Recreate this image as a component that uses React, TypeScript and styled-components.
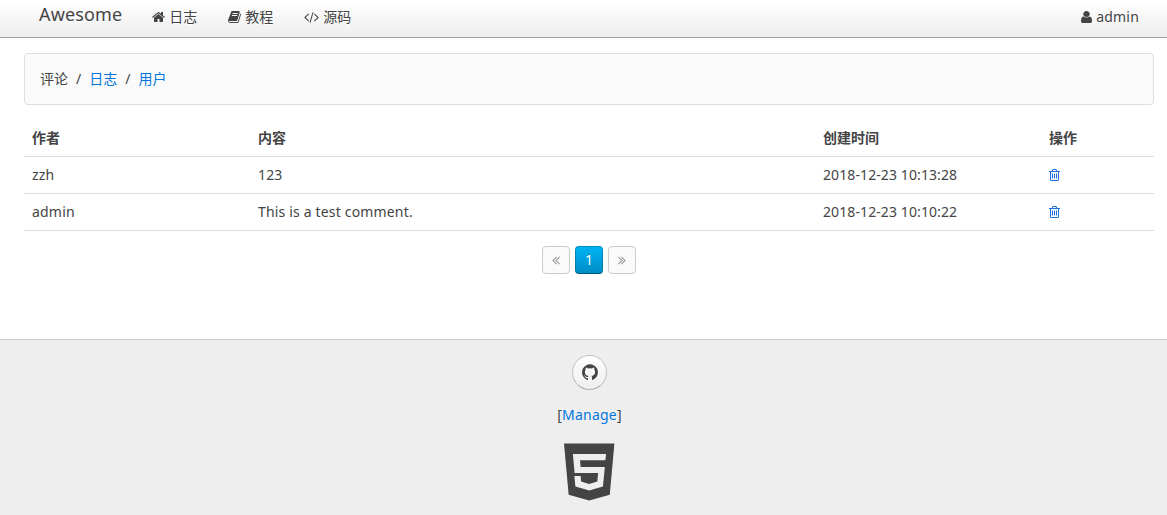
import React from 'react';
import styled, { createGlobalStyle, css } from 'styled-components';

const Global = createGlobalStyle`
  *, *::before, *::after { box-sizing: border-box; }
  html { background: #fff; }
  body {
    margin: 0;
    overflow: hidden;
    font: 14px/20px "Noto Sans", "Noto Sans CJK SC", sans-serif;
    color: #444;
  }
`;

const glyphs = {
  home: {
    box: '64 0 1664 1792',
    width: 13,
    d: 'M1472 992v480q0 26-19 45t-45 19h-384v-384h-256v384h-384q-26 0-45-19t-19-45v-480q0-1 .5-3t.5-3l575-474 575 474q1 2 1 6zm223-69l-62 74q-8 9-21 11h-3q-13 0-21-7l-692-577-692 577q-12 8-24 7-13-2-21-11l-62-74q-8-10-7-23.5t11-21.5l719-599q32-26 76-26t76 26l244 204v-195q0-14 9-23t23-9h192q14 0 23 9t9 23v408l219 182q10 8 11 21.5t-7 23.5z',
  },
  book: {
    box: '64 0 1664 1792',
    width: 13,
    d: 'M1703 478q40 57 18 129l-275 906q-19 64-76.5 107.5t-122.5 43.5h-923q-77 0-148.5-53.5t-99.5-131.5q-24-67-2-127 0-4 3-27t4-37q1-8-3-21.5t-3-19.5q2-11 8-21t16.5-23.5 16.5-23.5q23-38 45-91.5t30-91.5q3-10 .5-30t-.5-28q3-11 17-28t17-23q21-36 42-92t25-90q1-9-2.5-32t.5-28q4-13 22-30.5t22-22.5q19-26 42.5-84.5t27.5-96.5q1-8-3-25.5t-2-26.5q2-8 9-18t18-23 17-21q8-12 16.5-30.5t15-35 16-36 19.5-32 26.5-23.5 36-11.5 47.5 5.5l-1 3q38-9 51-9h761q74 0 114 56t18 130l-274 906q-36 119-71.5 153.5t-128.5 34.5h-869q-27 0-38 15-11 16-1 43 24 70 144 70h923q29 0 56-15.5t35-41.5l300-987q7-22 5-57 38 15 59 43zm-1064 2q-4 13 2 22.5t20 9.5h608q13 0 25.5-9.5t16.5-22.5l21-64q4-13-2-22.5t-20-9.5h-608q-13 0-25.5 9.5t-16.5 22.5zm-83 256q-4 13 2 22.5t20 9.5h608q13 0 25.5-9.5t16.5-22.5l21-64q4-13-2-22.5t-20-9.5h-608q-13 0-25.5 9.5t-16.5 22.5z',
  },
  code: {
    box: '0 0 1920 1792',
    width: 15,
    d: 'M617 1399l-50 50q-10 10-23 10t-23-10l-466-466q-10-10-10-23t10-23l466-466q10-10 23-10t23 10l50 50q10 10 10 23t-10 23l-393 393 393 393q10 10 10 23t-10 23zm591-1067l-373 1291q-4 13-15.5 19.5t-23.5 2.5l-62-17q-13-4-19.5-15.5t-2.5-24.5l373-1291q4-13 15.5-19.5t23.5-2.5l62 17q13 4 19.5 15.5t2.5 24.5zm657 651l-466 466q-10 10-23 10t-23-10l-50-50q-10-10-10-23t10-23l393-393-393-393q-10-10-10-23t10-23l50-50q10-10 23-10t23 10l466 466q10 10 10 23t-10 23z',
  },
  user: {
    box: '256 0 1280 1792',
    width: 11,
    d: 'M1536 1399q0 109-62.5 187t-150.5 78h-854q-88 0-150.5-78t-62.5-187q0-85 8.5-160.5t31.5-152 58.5-131 94-89 134.5-34.5q131 128 313 128t313-128q76 0 134.5 34.5t94 89 58.5 131 31.5 152 8.5 160.5zm-256-887q0 159-112.5 271.5t-271.5 112.5-271.5-112.5-112.5-271.5 112.5-271.5 271.5-112.5 271.5 112.5 112.5 271.5z',
  },
  trash: {
    box: '192 0 1408 1792',
    width: 11,
    d: 'M704 736v576q0 14-9 23t-23 9h-64q-14 0-23-9t-9-23v-576q0-14 9-23t23-9h64q14 0 23 9t9 23zm256 0v576q0 14-9 23t-23 9h-64q-14 0-23-9t-9-23v-576q0-14 9-23t23-9h64q14 0 23 9t9 23zm256 0v576q0 14-9 23t-23 9h-64q-14 0-23-9t-9-23v-576q0-14 9-23t23-9h64q14 0 23 9t9 23zm128 724v-948h-896v948q0 22 7 40.5t14.5 27 10.5 8.5h832q3 0 10.5-8.5t14.5-27 7-40.5zm-672-1076h448l-48-117q-7-9-17-11h-317q-10 2-17 11zm928 32v64q0 14-9 23t-23 9h-96v948q0 83-47 143.5t-113 60.5h-832q-66 0-113-58.5t-47-141.5v-952h-96q-14 0-23-9t-9-23v-64q0-14 9-23t23-9h309l70-167q15-37 54-63t79-26h320q40 0 79 26t54 63l70 167h309q14 0 23 9t9 23z',
  },
  prev: {
    box: '0 0 1024 1792',
    width: 8,
    d: 'M627 1376q0 13-10 23l-50 50q-10 10-23 10t-23-10l-466-466q-10-10-10-23t10-23l466-466q10-10 23-10t23 10l50 50q10 10 10 23t-10 23l-393 393 393 393q10 10 10 23zm384 0q0 13-10 23l-50 50q-10 10-23 10t-23-10l-466-466q-10-10-10-23t10-23l466-466q10-10 23-10t23 10l50 50q10 10 10 23t-10 23l-393 393 393 393q10 10 10 23z',
  },
  next: {
    box: '0 0 1024 1792',
    width: 8,
    d: 'M595 960q0 13-10 23l-466 466q-10 10-23 10t-23-10l-50-50q-10-10-10-23t10-23l393-393-393-393q-10-10-10-23t10-23l50-50q10-10 23-10t23 10l466 466q10 10 10 23zm384 0q0 13-10 23l-466 466q-10 10-23 10t-23-10l-50-50q-10-10-10-23t10-23l393-393-393-393q-10-10-10-23t10-23l50-50q10-10 23-10t23 10l466 466q10 10 10 23z',
  },
  github: {
    box: '128 0 1536 1792',
    width: 12,
    d: 'M896 128q209 0 385.5 103t279.5 279.5 103 385.5q0 251-146.5 451.5t-378.5 277.5q-27 5-40-7t-13-30q0-3 .5-76.5t.5-134.5q0-97-52-142 57-6 102.5-18t94-39 81-66.5 53-105 20.5-150.5q0-119-79-206 37-91-8-204-28-9-81 11t-92 44l-38 24q-93-26-192-26t-192 26q-16-11-42.5-27t-83.5-38.5-85-13.5q-45 113-8 204-79 87-79 206 0 85 20.5 150t52.5 105 80.5 67 94 39 102.5 18q-39 36-49 103-21 10-45 15t-57 5-65.5-21.5-55.5-62.5q-19-32-48.5-52t-49.5-24l-20-3q-21 0-29 4.5t-5 11.5 9 14 13 12l7 5q22 10 43.5 38t31.5 51l10 23q13 38 44 61.5t67 30 69.5 7 55.5-3.5l23-4q0 38 .5 88.5t.5 54.5q0 18-13 30t-40 7q-232-77-378.5-277.5t-146.5-451.5q0-209 103-385.5t279.5-279.5 385.5-103z',
  },
};

const Svg = styled.svg`
  display: inline-block;
  flex: none;
  vertical-align: -2px;
  fill: currentColor;
`;

function Icon({ name, scale = 1 }: { name: keyof typeof glyphs; scale?: number }) {
  const g = glyphs[name];
  return (
    <Svg
      viewBox={g.box}
      width={g.width * scale}
      height={14 * scale}
      preserveAspectRatio="none"
      aria-hidden
    >
      <path d={g.d} />
    </Svg>
  );
}

const Navbar = styled.nav`
  display: flex;
  height: 38px;
  padding: 0 13px 0 24px;
  background: linear-gradient(to bottom, #fff, #eee);
  border-bottom: 1px solid #a2a2a2;
  text-shadow: 0 1px 0 #fff;
`;

const Brand = styled.a`
  padding: 0 15px;
  font-size: 18px;
  line-height: 28px;
  letter-spacing: 0.14px;
`;

const NavItem = styled.a<{ $end?: boolean }>`
  padding: 0 16px 0 15px;
  line-height: 34px;
  white-space: nowrap;

  ${Svg} {
    margin-right: 4px;
  }

  ${(p) =>
    p.$end &&
    css`
      margin-left: auto;
      padding-right: 15px;
      letter-spacing: 0.2px;
    `}
`;

const Main = styled.main`
  height: 301px;
  padding: 15px 13px 0 24px;
`;

const Panel = styled.div`
  height: 52px;
  padding: 15px;
  background: #fafafa;
  border: 1px solid #ddd;
  border-radius: 4px;
`;

const Breadcrumb = styled.ul`
  display: flex;
  margin: 0;
  padding: 0;
  list-style: none;

  li + li::before {
    content: "/";
    margin: 0 8px;
  }
`;

const Link = styled.a`
  color: #07d;
  text-decoration: none;
`;

const DeleteLink = styled(Link)`
  color: #1a6fe0;
`;

const Table = styled.table`
  width: 100%;
  margin-top: 15px;
  border-collapse: separate;
  border-spacing: 0;
  table-layout: fixed;
`;

const cell = css`
  height: 37px;
  padding: 8px;
  border-bottom: 1px solid #ddd;
  text-align: left;
  vertical-align: top;
`;

const Head = styled.th<{ $width: string }>`
  ${cell}
  width: ${(p) => p.$width};
  font-weight: 700;
`;

const Cell = styled.td<{ $tracking?: number }>`
  ${cell}
  letter-spacing: ${(p) => p.$tracking ?? 0}px;
`;

const Pagination = styled.div`
  display: flex;
  justify-content: center;
  gap: 5px;
  margin-top: 15px;
`;

const Page = styled.span<{ $active?: boolean }>`
  min-width: 28px;
  height: 28px;
  padding: 3px 5px;
  border: 1px solid rgba(0, 0, 0, 0.2);
  border-bottom-color: rgba(0, 0, 0, 0.3);
  border-radius: 4px;
  text-align: center;
  ${(p) =>
    p.$active
      ? css`
          color: #fff;
          background: linear-gradient(to bottom, #00b4f5, #008dc5) border-box;
          border-bottom-color: rgba(0, 0, 0, 0.4);
          text-shadow: 0 -1px 0 rgba(0, 0, 0, 0.2);
        `
      : css`
          color: #999;
          background: #fafafa;
          border-color: #ccc;
          text-shadow: 0 1px 0 #fff;
        `}
`;

const Footer = styled.footer`
  display: flex;
  flex-direction: column;
  align-items: center;
  height: 176px;
  padding: 15px 0 0 12px;
  background: #eee;
  border-top: 1px solid #ccc;
`;

const RoundButton = styled.a`
  display: flex;
  align-items: center;
  justify-content: center;
  width: 35px;
  height: 35px;
  padding-left: 1px;
  border: 1px solid rgba(0, 0, 0, 0.2);
  border-bottom-color: rgba(0, 0, 0, 0.3);
  border-radius: 50%;
  background: linear-gradient(to bottom, #fff, #eee);
`;

const Manage = styled.p`
  margin: 15px 0 18px;
  letter-spacing: 0.22px;
`;

const comments = [
  { author: 'zzh', text: '123', time: '2018-12-23 10:13:28' },
  { author: 'admin', text: 'This is a test comment.', time: '2018-12-23 10:10:22' },
];

export default function App() {
  return (
    <>
      <Global />
      <Navbar>
        <Brand>Awesome</Brand>
        <NavItem><Icon name="home" />日志</NavItem>
        <NavItem><Icon name="book" />教程</NavItem>
        <NavItem><Icon name="code" />源码</NavItem>
        <NavItem $end><Icon name="user" />admin</NavItem>
      </Navbar>
      <Main>
        <Panel>
          <Breadcrumb>
            <li>评论</li>
            <li><Link>日志</Link></li>
            <li><Link>用户</Link></li>
          </Breadcrumb>
        </Panel>
        <Table>
          <thead>
            <tr>
              <Head $width="20%">作者</Head>
              <Head $width="50%">内容</Head>
              <Head $width="20%">创建时间</Head>
              <Head $width="10%">操作</Head>
            </tr>
          </thead>
          <tbody>
            {comments.map((c) => (
              <tr key={c.time}>
                <Cell $tracking={0.2}>{c.author}</Cell>
                <Cell $tracking={0.17}>{c.text}</Cell>
                <Cell $tracking={0.1}>{c.time}</Cell>
                <Cell><DeleteLink><Icon name="trash" /></DeleteLink></Cell>
              </tr>
            ))}
          </tbody>
        </Table>
        <Pagination>
          <Page><Icon name="prev" /></Page>
          <Page $active>1</Page>
          <Page><Icon name="next" /></Page>
        </Pagination>
      </Main>
      <Footer>
        <RoundButton><Icon name="github" scale={1.33} /></RoundButton>
        <Manage>[<Link>Manage</Link>]</Manage>
        <svg width="51" height="58" viewBox="0 0 51.6 58" preserveAspectRatio="none" fill="#444" aria-label="HTML5">
          <path fillRule="evenodd" d="M0 .4H51L46.3 51.7 25.5 57.5 4.7 51.7ZM9 11 10.7 30H34.5L33.7 38.6 25.5 41 17.3 38.6 16.8 33H10.5L11.5 43.5 25.5 47.5 39.4 43.5 41.3 24H16.8L16.2 17.3H41.9L42.5 11Z" />
        </svg>
      </Footer>
    </>
  );
}
